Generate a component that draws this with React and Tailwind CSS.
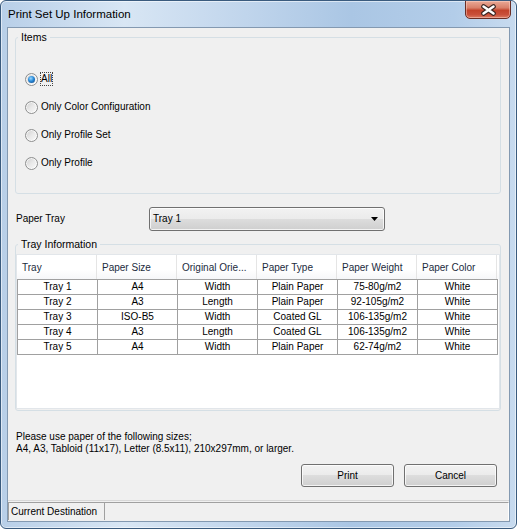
import React from "react";

const headers = ["Tray", "Paper Size", "Original Orie...", "Paper Type", "Paper Weight", "Paper Color"];
const rows = [
  ["Tray 1", "A4", "Width", "Plain Paper", "75-80g/m2", "White"],
  ["Tray 2", "A3", "Length", "Plain Paper", "92-105g/m2", "White"],
  ["Tray 3", "ISO-B5", "Width", "Coated GL", "106-135g/m2", "White"],
  ["Tray 4", "A3", "Length", "Coated GL", "106-135g/m2", "White"],
  ["Tray 5", "A4", "Width", "Plain Paper", "62-74g/m2", "White"],
];

function Radio({ checked, label }) {
  return (
    <div className="h-[28px] flex items-center gap-[3px]">
      <div className="w-[13px] h-[13px] rounded-full border border-[#8e8f8f] bg-[linear-gradient(135deg,#cfcfcf_0%,#e9e9e9_50%,#fbfbfb_100%)] shadow-[inset_0_0_0_1px_rgba(255,255,255,0.7)] flex items-center justify-center">
        {checked && (
          <div className="w-[7px] h-[7px] rounded-full bg-[radial-gradient(circle_at_40%_35%,#9ad8ff_0%,#2a8ad8_45%,#0d3f7c_100%)]" />
        )}
      </div>
      {checked ? (
        <span className="border border-dotted border-[#444] px-0 leading-[12px] ml-[-1px]">{label}</span>
      ) : (
        <span className="leading-[12px]">{label}</span>
      )}
    </div>
  );
}

export default function App() {
  return (
    <div className="w-[517px] h-[529px] bg-white">
      <div className="relative w-full h-full rounded-[6px] border border-[#3a5b7e] shadow-[inset_0_0_0_1px_rgba(255,255,255,0.55)] flex flex-col overflow-hidden bg-[linear-gradient(90deg,#b8cfe8_0%,#d8e6f4_24%,#c6d9ee_42%,#aac6e4_68%,#b3cde9_88%,#c8dbef_100%)] font-['Liberation_Sans',Arial,sans-serif]">
        {/* Title bar */}
        <div className="h-[26px] flex items-center pl-[7px] pt-[1px] text-[11.5px] text-black">
          Print Set Up Information
        </div>
        {/* Close button */}
        <div className="absolute top-[-1px] right-[5px] w-[46px] h-[19px] rounded-b-[5px] border border-[#6a2e25] bg-[linear-gradient(180deg,#e9a996_0%,#d8806a_40%,#c2432b_55%,#c9503a_80%,#dc7b62_100%)] shadow-[inset_0_0_0_1px_rgba(255,220,210,0.45)] flex items-center justify-center">
          <svg width="15" height="12" viewBox="0 0 15 12">
            <path d="M2.5 2.5 L12.5 9.5 M12.5 2.5 L2.5 9.5" stroke="#3a2420" strokeWidth="4.6" strokeLinecap="round" fill="none" />
            <path d="M2.5 2.5 L12.5 9.5 M12.5 2.5 L2.5 9.5" stroke="#ffffff" strokeWidth="2.5" strokeLinecap="round" fill="none" />
          </svg>
        </div>

        {/* Client */}
        <div className="mx-[6px] mb-[6px] flex-1 border border-[#8399b1] bg-[#f0f0f0] flex flex-col text-[10px] leading-[12px] text-black">
          {/* Items */}
          <fieldset className="ml-[7px] mt-[3px] w-[486px] h-[163px] border border-[#d5dfe5] rounded-[3px]">
            <legend className="ml-[2px] px-[3px] leading-[13px] text-[10.5px]">Items</legend>
            <div className="pt-[21px] pl-[9px] flex flex-col">
              <Radio checked label="All" />
              <Radio label="Only Color Configuration" />
              <Radio label="Only Profile Set" />
              <Radio label="Only Profile" />
            </div>
          </fieldset>

          {/* Paper tray */}
          <div className="mt-[13px] h-[24px] flex items-center pl-[8px]">
            <div className="w-[133px]">Paper Tray</div>
            <div className="w-[236px] h-[24px] rounded-[3px] border border-[#707070] bg-[linear-gradient(180deg,#f2f2f2_0%,#ebebeb_50%,#dddddd_50%,#cfcfcf_100%)] shadow-[inset_0_0_0_1px_rgba(255,255,255,0.75)] flex items-center pl-[3px] pr-[6px]">
              <span className="flex-1">Tray 1</span>
              <svg width="7" height="4" viewBox="0 0 7 4">
                <path d="M0 0 L7 0 L3.5 4 Z" fill="#000" />
              </svg>
            </div>
          </div>

          {/* Tray information */}
          <fieldset className="ml-[7px] mt-[7px] w-[486px] h-[173px] border border-[#d5dfe5] rounded-[3px]">
            <legend className="ml-[2px] px-[3px] leading-[13px] text-[10.5px]">Tray Information</legend>
            <div className="h-[158px] flex flex-col">
              <div className="mt-[3px] flex-1 border border-[#e2e6ea] bg-white flex flex-col">
                <div className="h-[24px] flex bg-[linear-gradient(180deg,#ffffff_0%,#ffffff_60%,#f6f7f9_100%)] text-[#1b2b3d]">
                  {headers.map((h) => (
                    <div key={h} className="w-[80px] h-full border-r border-[#e5e5e5] pl-[5px] pt-[2px] flex items-center whitespace-nowrap overflow-hidden">
                      {h}
                    </div>
                  ))}
                </div>
                <div className="flex flex-col border-t border-[#a0a0a0] w-[481px]">
                  {rows.map((r, i) => (
                    <div key={i} className="flex h-[15px]">
                      {r.map((c, j) => (
                        <div
                          key={j}
                          className={
                            j === 0
                              ? "w-[81px] h-full border-l border-r border-b border-[#a0a0a0] text-center leading-[14px]"
                              : "w-[80px] h-full border-r border-b border-[#a0a0a0] text-center leading-[14px]"
                          }
                        >
                          {c}
                        </div>
                      ))}
                    </div>
                  ))}
                </div>
              </div>
            </div>
          </fieldset>

          {/* Note */}
          <div className="mt-[20px] pl-[8px]">
            <div>Please use paper of the following sizes;</div>
            <div>A4, A3, Tabloid (11x17), Letter (8.5x11), 210x297mm, or larger.</div>
          </div>

          {/* Buttons */}
          <div className="mt-[9px] flex justify-end gap-[10px] pr-[12px]">
            {["Print", "Cancel"].map((b) => (
              <div
                key={b}
                className="w-[93px] h-[23px] rounded-[3px] border border-[#707070] bg-[linear-gradient(180deg,#f2f2f2_0%,#ebebeb_50%,#dddddd_50%,#cfcfcf_100%)] shadow-[inset_0_0_0_1px_rgba(255,255,255,0.75)] flex items-center justify-center"
              >
                {b}
              </div>
            ))}
          </div>

          {/* Status bar */}
          <div className="mt-auto h-[21px] border-t border-[#d7d7d7] pt-[1px] pb-[1px] flex">
            <div className="w-[97px] h-full border-l border-t border-[#a0a0a0] border-r pl-[2px] flex items-center whitespace-nowrap">
              Current Destination
            </div>
            <div className="flex-1 h-full border-t border-[#a0a0a0] border-r border-r-white" />
          </div>
        </div>
      </div>
    </div>
  );
}
